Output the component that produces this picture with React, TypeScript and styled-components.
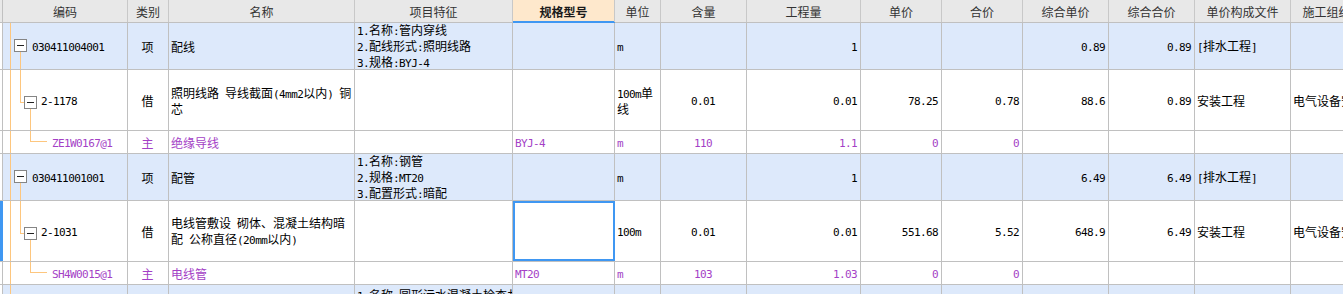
import React from "react";
import styled, { createGlobalStyle, css } from "styled-components";

const LINE = "#c0c0c0";
const TREE = "#fdc67e";
const PURPLE = "#a43fc6";
const GROUP_BG = "#dde9fb";
const SELECT = "#3f97f2";

// column widths incl. the 1px right border; first is the row marker strip
const COLUMNS = [3, 125, 41, 186, 158, 102, 46, 86, 114, 81, 81, 86, 86, 96, 120];
const TRACKS = COLUMNS.map((w) => `${w}px`).join(" ");

const HEADERS = [
  "编码",
  "类别",
  "名称",
  "项目特征",
  "规格型号",
  "单位",
  "含量",
  "工程量",
  "单价",
  "合价",
  "综合单价",
  "综合合价",
  "单价构成文件",
  "施工组织措施类别",
];

type Kind = "group" | "item" | "material";
type Align = "left" | "center" | "right";

interface BillRow {
  kind: Kind;
  height: number;
  code: string;
  type: string;
  name: string[];
  feature?: string[];
  spec?: string;
  unit?: string[];
  ratio?: string;
  quantity?: string;
  price?: string;
  total?: string;
  unitPrice?: string;
  unitTotal?: string;
  file?: string;
  category?: string;
  selected?: boolean;
}

const ROWS: BillRow[] = [
  {
    kind: "group",
    height: 46,
    code: "030411004001",
    type: "项",
    name: ["配线"],
    feature: ["1.名称:管内穿线", "2.配线形式:照明线路", "3.规格:BYJ-4"],
    unit: ["m"],
    quantity: "1",
    unitPrice: "0.89",
    unitTotal: "0.89",
    file: "[排水工程]",
  },
  {
    kind: "item",
    height: 60,
    code: "2-1178",
    type: "借",
    name: ["照明线路 导线截面(4mm2以内) 铜", "芯"],
    unit: ["100m单", "线"],
    ratio: "0.01",
    quantity: "0.01",
    price: "78.25",
    total: "0.78",
    unitPrice: "88.6",
    unitTotal: "0.89",
    file: "安装工程",
    category: "电气设备安装工程",
  },
  {
    kind: "material",
    height: 22,
    code: "ZE1W0167@1",
    type: "主",
    name: ["绝缘导线"],
    spec: "BYJ-4",
    unit: ["m"],
    ratio: "110",
    quantity: "1.1",
    price: "0",
    total: "0",
  },
  {
    kind: "group",
    height: 46,
    code: "030411001001",
    type: "项",
    name: ["配管"],
    feature: ["1.名称:钢管", "2.规格:MT20", "3.配置形式:暗配"],
    unit: ["m"],
    quantity: "1",
    unitPrice: "6.49",
    unitTotal: "6.49",
    file: "[排水工程]",
  },
  {
    kind: "item",
    height: 60,
    code: "2-1031",
    type: "借",
    name: ["电线管敷设 砌体、混凝土结构暗", "配 公称直径(20mm以内)"],
    unit: ["100m"],
    ratio: "0.01",
    quantity: "0.01",
    price: "551.68",
    total: "5.52",
    unitPrice: "648.9",
    unitTotal: "6.49",
    file: "安装工程",
    category: "电气设备安装工程",
    selected: true,
  },
  {
    kind: "material",
    height: 22,
    code: "SH4W0015@1",
    type: "主",
    name: ["电线管"],
    spec: "MT20",
    unit: ["m"],
    ratio: "103",
    quantity: "1.03",
    price: "0",
    total: "0",
  },
  {
    kind: "group",
    height: 100,
    code: "040504001001",
    type: "项",
    name: ["砌筑井"],
    feature: [
      "1.名称:圆形污水混凝土检查井",
      "2.规格:Φ1000",
      "3.井深:2.5m",
      "4.垫层:C15混凝土",
      "5.盖板:钢筋混凝土",
      "6.井盖:球墨铸铁",
    ],
    unit: ["座"],
    quantity: "1",
    file: "[排水工程]",
  },
];

const ASCII_RUN = /([\x20-\x7e]+)/;

// wraps latin runs so they get the narrow fixed-width face
const mixed = (text: string) =>
  text
    .split(ASCII_RUN)
    .filter(Boolean)
    .map((part, i) =>
      ASCII_RUN.test(part) && /^[\x20-\x7e]+$/.test(part) ? (
        <Latin key={i}>{part}</Latin>
      ) : (
        <React.Fragment key={i}>{part}</React.Fragment>
      )
    );

const centerOf = (kind: Kind, height: number) =>
  kind === "item" ? Math.floor(height / 2) + 2 : Math.floor(height / 2) - 1;

const Expander: React.FC<{ x: number; cy: number }> = ({ x, cy }) => (
  <g>
    <rect x={x + 0.5} y={cy - 5.5} width={12} height={12} fill="#fff" stroke="#858585" />
    <line x1={x + 3} y1={cy + 0.5} x2={x + 10} y2={cy + 0.5} stroke="#222" />
  </g>
);

const TreeGuide: React.FC<{ kind: Kind; height: number }> = ({ kind, height }) => {
  const cy = centerOf(kind, height);
  const y = cy + 0.5;
  const width = kind === "group" ? 29 : kind === "item" ? 38 : 49;
  return (
    <Guide width={width} height={height} viewBox={`0 0 ${width} ${height}`}>
      <line x1={7.5} y1={0} x2={7.5} y2={height} />
      {kind === "group" && (
        <>
          <line x1={17.5} y1={cy + 7} x2={17.5} y2={height} />
          <Expander x={11} cy={cy} />
        </>
      )}
      {kind === "item" && (
        <>
          <line x1={17.5} y1={0} x2={17.5} y2={y} />
          <line x1={17.5} y1={y} x2={21} y2={y} />
          <line x1={27.5} y1={cy + 7} x2={27.5} y2={height} />
          <Expander x={21} cy={cy} />
        </>
      )}
      {kind === "material" && (
        <>
          <line x1={27.5} y1={0} x2={27.5} y2={y} />
          <line x1={27.5} y1={y} x2={44} y2={y} />
        </>
      )}
    </Guide>
  );
};

const TextCell: React.FC<{
  lines?: string[];
  align?: Align;
  tone?: string;
  selected?: boolean;
}> = ({ lines, align = "left", tone, selected }) => (
  <Cell $align={align} $tone={tone} $selected={selected}>
    {lines?.map((line, i) => (
      <Line key={i}>{mixed(line)}</Line>
    ))}
  </Cell>
);

const BillLine: React.FC<{ row: BillRow }> = ({ row }) => {
  const tone = row.kind === "material" ? PURPLE : undefined;
  const one = (v?: string) => (v ? [v] : undefined);
  return (
    <Row $height={row.height} $group={row.kind === "group"}>
      <Marker $active={row.selected} />
      <CodeCell $tone={tone}>
        <TreeGuide kind={row.kind} height={row.height} />
        <CodeText>{mixed(row.code)}</CodeText>
      </CodeCell>
      <TextCell lines={[row.type]} align="center" tone={tone} />
      <TextCell lines={row.name} tone={tone} />
      <TextCell lines={row.feature} />
      <TextCell lines={one(row.spec)} tone={tone} selected={row.selected} />
      <TextCell lines={row.unit} tone={tone} />
      <TextCell lines={one(row.ratio)} align="center" tone={tone} />
      <TextCell lines={one(row.quantity)} align="right" tone={tone} />
      <TextCell lines={one(row.price)} align="right" tone={tone} />
      <TextCell lines={one(row.total)} align="right" tone={tone} />
      <TextCell lines={one(row.unitPrice)} align="right" tone={tone} />
      <TextCell lines={one(row.unitTotal)} align="right" tone={tone} />
      <TextCell lines={one(row.file)} />
      <TextCell lines={one(row.category)} />
    </Row>
  );
};

export default function App() {
  return (
    <>
      <GlobalStyle />
      <Sheet>
        <HeaderRow>
          <HeaderMarker />
          {HEADERS.map((title) => (
            <HeaderCell key={title} $active={title === "规格型号"}>
              {title}
            </HeaderCell>
          ))}
        </HeaderRow>
        {ROWS.map((row) => (
          <BillLine key={row.code} row={row} />
        ))}
      </Sheet>
    </>
  );
}

const GlobalStyle = createGlobalStyle`
  *, *::before, *::after {
    box-sizing: border-box;
  }
  html, body {
    margin: 0;
    padding: 0;
    overflow: hidden;
    background: #fff;
  }
  body {
    font-family: "Noto Sans CJK SC", "Noto Sans", sans-serif;
    font-size: 12px;
    color: #000;
  }
`;

const Sheet = styled.div`
  display: flex;
  flex-direction: column;
  width: max-content;
`;

const HeaderRow = styled.div`
  display: grid;
  grid-template-columns: ${TRACKS};
  height: 23px;
  background: #e8e8e8;
  border-bottom: 1px solid ${LINE};
`;

const HeaderMarker = styled.div`
  border-right: 1px solid ${LINE};
`;

const HeaderCell = styled.div<{ $active?: boolean }>`
  display: flex;
  align-items: center;
  justify-content: center;
  border-right: 1px solid #c8c8c8;
  font-size: 12px;
  color: #333;
  white-space: nowrap;
  overflow: hidden;
  ${(p) =>
    p.$active &&
    css`
      background: #fee8cc;
      color: #1a1a1a;
      font-weight: 700;
      box-shadow: inset 0 -1px 0 ${SELECT}, 0 1px 0 ${SELECT};
    `}
`;

const Row = styled.div<{ $height: number; $group?: boolean }>`
  display: grid;
  grid-template-columns: ${TRACKS};
  height: ${(p) => p.$height + 1}px;
  border-bottom: 1px solid ${LINE};
  background: ${(p) => (p.$group ? GROUP_BG : "#fff")};
`;

const Marker = styled.div<{ $active?: boolean }>`
  background: ${(p) => (p.$active ? SELECT : "#fff")};
  border-right: ${(p) => (p.$active ? "none" : `1px solid ${LINE}`)};
`;

const Cell = styled.div<{ $align: Align; $tone?: string; $selected?: boolean }>`
  display: flex;
  flex-direction: column;
  justify-content: center;
  align-items: ${(p) =>
    p.$align === "right" ? "flex-end" : p.$align === "center" ? "center" : "flex-start"};
  padding: 2px 3px 0 2px;
  border-right: 1px solid ${LINE};
  overflow: hidden;
  white-space: nowrap;
  line-height: 14px;
  color: ${(p) => p.$tone ?? "#000"};
  ${(p) =>
    p.$selected &&
    css`
      background: #fff;
      outline: 2px solid ${SELECT};
      outline-offset: -2px;
    `}
`;

const CodeCell = styled.div<{ $tone?: string }>`
  display: flex;
  align-items: center;
  border-right: 1px solid ${LINE};
  overflow: hidden;
  white-space: nowrap;
  color: ${(p) => p.$tone ?? "#000"};
`;

const Guide = styled.svg`
  display: block;
  flex-shrink: 0;
  stroke: ${TREE};
  stroke-width: 1;
  shape-rendering: crispEdges;
`;

const CodeText = styled.span`
  padding-top: 2px;
  line-height: 14px;
`;

const Line = styled.div`
  line-height: 14px;
`;

const Latin = styled.span`
  font-family: "DejaVu Sans Mono", "Liberation Mono", monospace;
  font-size: 11px;
  letter-spacing: -0.6px;
  white-space: pre;
`;
